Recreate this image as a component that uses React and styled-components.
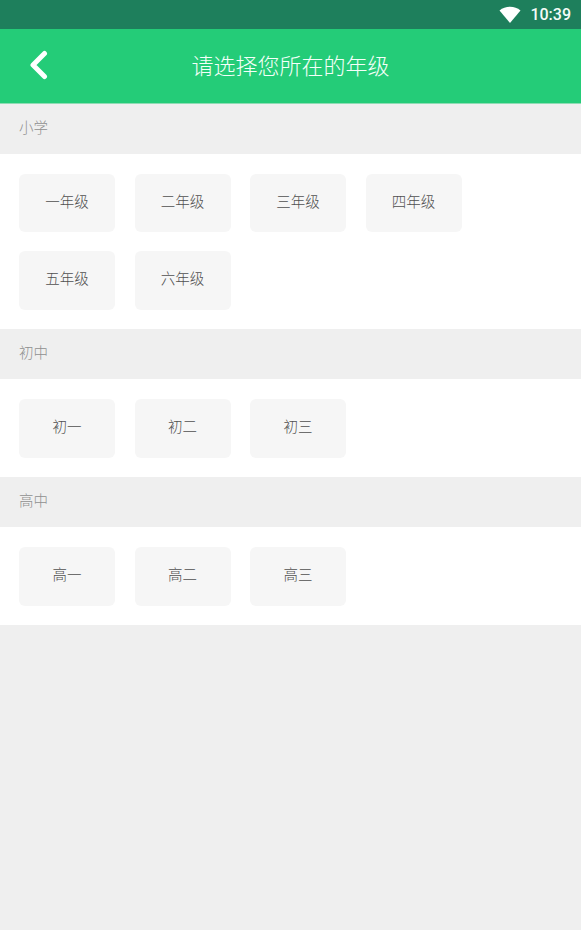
import React from 'react';
import styled, { createGlobalStyle } from 'styled-components';

const Global = createGlobalStyle`
  html, body { margin: 0; padding: 0; background: #efefef; }
  * { box-sizing: border-box; }
`;
const Page = styled.div`
  width: 581px; height: 930px; background: #efefef; overflow: hidden;
  font-family: "Noto Sans CJK SC", "Noto Sans", sans-serif;
`;
const StatusBar = styled.div`
  height: 29px; background: #1e7f5c; display: flex; align-items: center; justify-content: flex-end;
  padding-right: 10px; gap: 9px; color: #f4fbf7;
`;
const Clock = styled.span`
  font: 500 16px Roboto, sans-serif;
`;
const NavBar = styled.div`
  height: 74.5px; background: #24cc78; border-bottom: 1.5px solid #8fdcb4; position: relative;
  display: flex; align-items: center; justify-content: center;
`;
const BackButton = styled.div`
  position: absolute; left: 28px; top: 21px; width: 22px; height: 30px; display: flex;
`;
const Title = styled.h1`
  margin: 0; font-size: 22px; font-weight: 300; color: #f4fff9; line-height: 1; position: relative; top: -2px;
`;
const SectionHeader = styled.div`
  height: 50px; padding: 0 0 5px 19px; display: flex; align-items: center;
  font-size: 14.5px; font-weight: 300; color: #8f8f8f;
`;
const Grid = styled.div`
  background: #fff; padding: 20px 19px 19.5px; display: flex; flex-wrap: wrap; gap: 19px 19.5px;
`;
const Grade = styled.div`
  width: 96px; height: 58.5px; background: #f6f6f6; border-radius: 6px;
  display: flex; align-items: center; justify-content: center; padding-bottom: 5px;
  font-size: 14.5px; font-weight: 300; color: #505050;
`;

const sections = [
  { name: '小学', items: ['一年级', '二年级', '三年级', '四年级', '五年级', '六年级'] },
  { name: '初中', items: ['初一', '初二', '初三'] },
  { name: '高中', items: ['高一', '高二', '高三'] },
];

export default function App() {
  return (
    <Page>
      <Global />
      <StatusBar>
        <svg width="22" height="17" viewBox="0 0 22 17"><path d="M0.5 4.5C3.5 2 7 0.8 11 0.8S18.5 2 21.5 4.5L11 17Z" fill="#fff" /></svg>
        <Clock>10:39</Clock>
      </StatusBar>
      <NavBar>
        <BackButton>
          <svg width="22" height="30" viewBox="0 0 22 30"><path d="M16.5 3.5 5 15l11.5 11.5" fill="none" stroke="#fff" strokeWidth="5" strokeLinecap="round" strokeLinejoin="round" /></svg>
        </BackButton>
        <Title>请选择您所在的年级</Title>
      </NavBar>
      {sections.map(s => (
        <React.Fragment key={s.name}>
          <SectionHeader>{s.name}</SectionHeader>
          <Grid>
            {s.items.map(i => <Grade key={i}>{i}</Grade>)}
          </Grid>
        </React.Fragment>
      ))}
    </Page>
  );
}
